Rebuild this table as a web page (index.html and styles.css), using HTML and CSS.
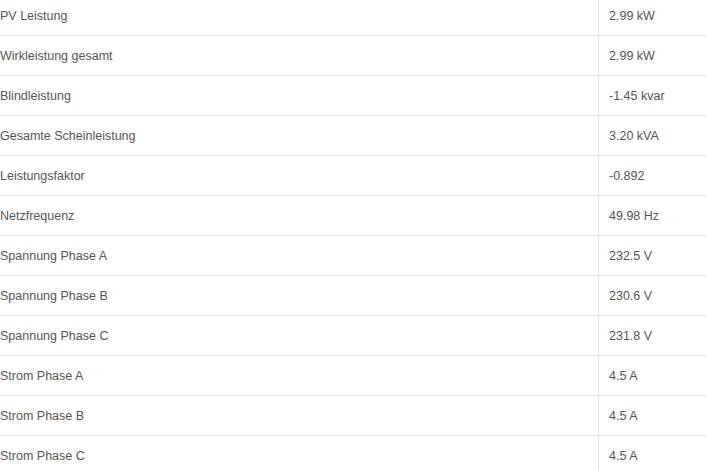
FILE: index.html
```html
<!DOCTYPE html>
<html lang="de">
<head>
<meta charset="utf-8">
<title>Messwerte</title>
<link rel="stylesheet" href="styles.css">
</head>
<body>
<div class="table">
  <div class="row"><div class="label">PV Leistung</div><div class="value">2.99 kW</div></div>
  <div class="row"><div class="label">Wirkleistung gesamt</div><div class="value">2.99 kW</div></div>
  <div class="row"><div class="label">Blindleistung</div><div class="value">-1.45 kvar</div></div>
  <div class="row"><div class="label">Gesamte Scheinleistung</div><div class="value">3.20 kVA</div></div>
  <div class="row"><div class="label">Leistungsfaktor</div><div class="value">-0.892</div></div>
  <div class="row"><div class="label">Netzfrequenz</div><div class="value">49.98 Hz</div></div>
  <div class="row"><div class="label">Spannung Phase A</div><div class="value">232.5 V</div></div>
  <div class="row"><div class="label">Spannung Phase B</div><div class="value">230.6 V</div></div>
  <div class="row"><div class="label">Spannung Phase C</div><div class="value">231.8 V</div></div>
  <div class="row"><div class="label">Strom Phase A</div><div class="value">4.5 A</div></div>
  <div class="row"><div class="label">Strom Phase B</div><div class="value">4.5 A</div></div>
  <div class="row"><div class="label">Strom Phase C</div><div class="value">4.5 A</div></div>
</div>
</body>
</html>
```
FILE: styles.css
```css
html, body {
  margin: 0;
  padding: 0;
  background: #ffffff;
  overflow: hidden;
}
.table {
  margin-top: -4px;
  font-family: "Liberation Sans", Arial, sans-serif;
  font-size: 12.5px;
  color: #555555;
}
.row {
  display: grid;
  grid-template-columns: 598px 1fr;
  height: 39px;
  border-bottom: 1px solid #e5e5e5;
}
.label {
  padding-top: 2px;
  line-height: 37px;
  white-space: nowrap;
}
.value {
  padding-top: 2px;
  line-height: 37px;
  border-left: 1px solid #e5e5e5;
  padding-left: 10px;
  white-space: nowrap;
}
```
